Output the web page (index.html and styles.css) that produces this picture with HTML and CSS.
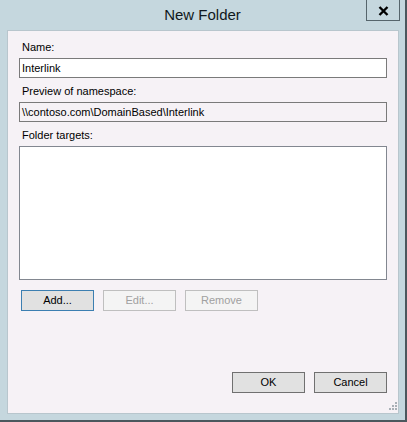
FILE: index.html
```html
<!DOCTYPE html>
<html>
<head>
<meta charset="utf-8">
<link rel="stylesheet" href="styles.css">
</head>
<body>
<div class="window">
  <div class="titlebar">
    <span></span>
    <span class="title">New Folder</span>
    <button class="close" type="button" aria-label="Close">
      <svg width="11" height="10" viewBox="0 0 11 10"><path d="M1.5 1 L9.5 9 M9.5 1 L1.5 9" stroke="#000" stroke-width="2.4" fill="none"/></svg>
    </button>
  </div>
  <div class="panel">
    <label class="label">Name:</label>
    <div class="field">Interlink</div>
    <label class="label">Preview of namespace:</label>
    <div class="field readonly">\\contoso.com\DomainBased\Interlink</div>
    <label class="label">Folder targets:</label>
    <div class="listbox"></div>
    <div class="row-buttons">
      <button class="btn default" type="button">Add...</button>
      <button class="btn" type="button" disabled>Edit...</button>
      <button class="btn" type="button" disabled>Remove</button>
    </div>
    <div class="spacer"></div>
    <div class="row-footer">
      <button class="btn" type="button">OK</button>
      <button class="btn" type="button">Cancel</button>
    </div>
    <div class="grip">
      <svg width="10" height="10" viewBox="0 0 10 10">
        <g fill="#a9b0b6">
          <rect x="8" y="0" width="2" height="2"/>
          <rect x="5" y="3" width="2" height="2"/><rect x="8" y="3" width="2" height="2"/>
          <rect x="2" y="6" width="2" height="2"/><rect x="5" y="6" width="2" height="2"/><rect x="8" y="6" width="2" height="2"/>
        </g>
      </svg>
    </div>
  </div>
</div>
</body>
</html>
```
FILE: styles.css
```css
* { box-sizing: border-box; }
html, body { margin: 0; padding: 0; }
body {
  width: 407px;
  height: 422px;
  overflow: hidden;
  font-family: "Liberation Sans", Arial, sans-serif;
  font-size: 11px;
  color: #000;
}
.window {
  width: 407px;
  height: 422px;
  background: #c5d7de;
  border-right: 2px solid #4b575d;
  border-bottom: 2px solid #4b575d;
  display: flex;
  flex-direction: column;
}
.titlebar {
  height: 30px;
  display: grid;
  grid-template-columns: 1fr auto 1fr;
  align-items: start;
}
.title {
  font-size: 15px;
  line-height: 18px;
  margin-top: 6px;
  color: #101820;
  white-space: nowrap;
}
.close {
  justify-self: end;
  margin: -1px 5px 0 0;
  width: 34px;
  height: 22px;
  border: 1px solid #56656c;
  background: transparent;
  padding: 0;
  display: flex;
  align-items: center;
  justify-content: center;
}
.close svg { display: block; margin-top: 1px; }
.panel {
  margin: 0 6px 6px 7px;
  height: 384px;
  background: #f6f2f6;
  border: 1px solid #b8c6cd;
  padding: 10px 11px 0 11px;
  display: flex;
  flex-direction: column;
  position: relative;
}
.label {
  display: block;
  line-height: 13px;
  padding-left: 3px;
  margin-bottom: 4px;
}
.field {
  height: 20px;
  border: 1px solid #7a7a7a;
  background: #fff;
  line-height: 18px;
  padding-left: 2px;
  margin-bottom: 7px;
  white-space: nowrap;
}
.field.readonly { background: #f6f2f6; }
.listbox {
  height: 134px;
  border: 1px solid #828790;
  background: #fff;
}
.row-buttons {
  display: flex;
  gap: 9px;
  margin-top: 10px;
  padding-left: 2px;
}
.btn {
  width: 73px;
  height: 21px;
  border: 1px solid #adadad;
  background: #e1e1e1;
  font-family: "Liberation Sans", Arial, sans-serif;
  font-size: 11px;
  color: #000;
  padding: 0;
  line-height: 19px;
}
.btn.default { border-color: #3c7fb1; }
.btn:disabled {
  background: #f4f4f4;
  border-color: #bfbfbf;
  color: #a0a0a0;
}
.spacer { flex: 1; }
.row-footer {
  display: flex;
  justify-content: flex-end;
  gap: 9px;
  margin-bottom: 20px;
}
.row-footer .btn { border-color: #707070; }
.grip {
  position: absolute;
  right: 1px;
  bottom: 1px;
  line-height: 0;
}
```
